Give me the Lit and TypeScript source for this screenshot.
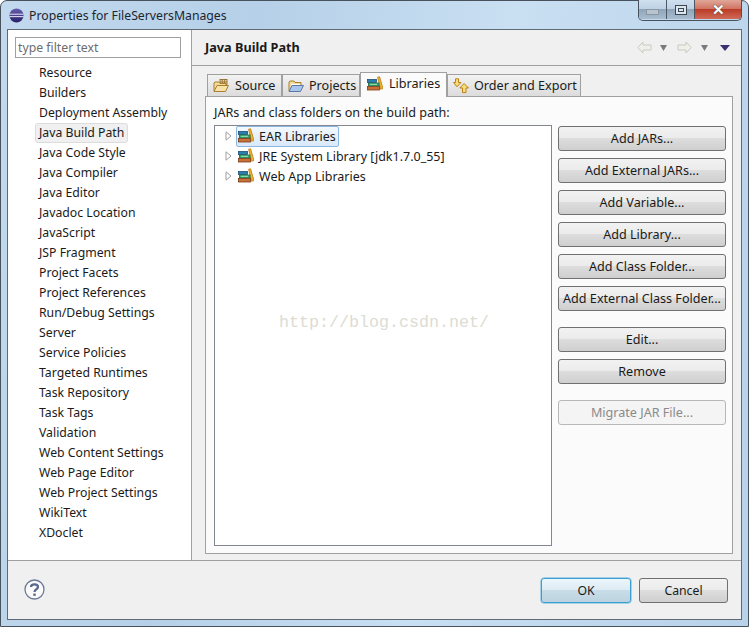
import { LitElement, html, css, svg } from "lit";
import { customElement } from "lit/decorators.js";

const sideItems = ["Resource","Builders","Deployment Assembly","Java Build Path","Java Code Style","Java Compiler","Java Editor","Javadoc Location","JavaScript","JSP Fragment","Project Facets","Project References","Run/Debug Settings","Server","Service Policies","Targeted Runtimes","Task Repository","Task Tags","Validation","Web Content Settings","Web Page Editor","Web Project Settings","WikiText","XDoclet"];

const books = svg`<svg width="16" height="16" viewBox="0 0 16 16">
  <path d="M10.6 1.2 L12.6 .8 L16 12.6 L13.4 13.2 Z" fill="#f2b52a" stroke="#b87a14" stroke-width=".8"/>
  <rect x=".5" y="3.5" width="9" height="3" fill="#2a7fae" stroke="#1c4f78" stroke-width=".8"/>
  <rect x="1.5" y="7" width="10.5" height="3" fill="#38ad72" stroke="#1f6a48" stroke-width=".8"/>
  <path d="M3 8.3H10" stroke="#bfeccd" stroke-width=".8"/>
  <rect x=".5" y="10.5" width="12" height="3.5" fill="#c9703a" stroke="#7a3c14" stroke-width=".8"/>
</svg>`;
const projIcon = svg`<svg width="16" height="16" viewBox="0 0 16 16">
  <path d="M1 13 L1 4 L2 3 L6 3 L7 4.5 L13 4.5 L13 7" fill="#f3dc9a" stroke="#a88030"/>
  <path d="M3 6.5H12" stroke="#fff"/>
  <path d="M1 13.5 L4 7.5 L15.5 7.5 L12.5 13.5 Z" fill="#a9c6ee" stroke="#5a78a8"/>
</svg>`;
const srcIcon = svg`<svg width="16" height="16" viewBox="0 0 16 16">
  <rect x="7" y="1.5" width="7" height="5" fill="#e8d0a0" stroke="#8a6020" stroke-width=".8"/>
  <path d="M9.3 1.5V6.5M11.6 1.5V6.5M7 4H14" stroke="#8a6020" stroke-width=".7"/>
  <path d="M1 13 L1 5 L2 4 L6 4 L7 5.5 L13 5.5 L13 7" fill="#f3dc9a" stroke="#a88030"/>
  <path d="M1 13.5 L4 7.5 L15.5 7.5 L12.5 13.5 Z" fill="#f6e2a8" stroke="#a88030"/>
</svg>`;
const orderIcon = svg`<svg width="16" height="16" viewBox="0 0 16 16">
  <path d="M2.5 .8H5.5V4.5H8L4 8.8L.5 4.5H2.5Z" fill="#f5dc80" stroke="#c08010"/>
  <path d="M11 5.5L15.5 10H13V14.6H9.5V10H6.8Z" fill="#f5dc80" stroke="#c08010"/>
</svg>`;
const arrow = (dir: number) => svg`<svg width="15" height="13" viewBox="0 0 15 13">
  <path transform="${dir < 0 ? "" : "translate(15 0) scale(-1 1)"}" d="M.7 6.5 L6 1 V4 H14 V9 H6 V12 Z" fill="#f0f0ea" stroke="#c8cbc0"/>
</svg>`;
const tri = (c: string, w: number) => svg`<svg width="${w}" height="6" viewBox="0 0 ${w} 6"><path d="M0 0H${w}L${w / 2} 6Z" fill="${c}"/></svg>`;
const expander = svg`<svg width="7" height="10" viewBox="0 0 7 10"><path d="M1 .8 L6 5 L1 9.2 Z" fill="#fff" stroke="#a0a0a0"/></svg>`;

@customElement("app-root")
export class AppRoot extends LitElement {
  static styles = css`
    :host { display: block; width: 749px; height: 627px; position: relative; overflow: hidden; font-family: "Noto Sans", sans-serif; font-size: 12.25px; color: #1a1a1a; background: #fff; }
    svg { flex: none; }
    .frame { width: 749px; height: 627px; box-sizing: border-box; display: flex; flex-direction: column; padding: 0 6px 6px 6px; border-radius: 7px 7px 0 0; border: 1px solid #48525c;
      background: linear-gradient(100deg, #c2d9ee 0%, #b5d0e8 30%, #c9dff2 60%, #b8d2ea 100%); }
    .title { height: 28px; flex: none; display: flex; align-items: center; gap: 5px; padding: 0 0 0 2px; position: relative; color: #1c2530; }
    .globe { width: 15px; height: 15px; margin-top: 1px; }
    .controls { position: absolute; right: 0; top: -1px; height: 20px; display: flex; border: 1px solid #49525c; border-top: none; border-radius: 0 0 5px 5px; overflow: hidden; }
    .ctl { width: 27px; height: 19px; display: flex; align-items: center; justify-content: center; border-right: 1px solid #4c5863; background: linear-gradient(#cfe0ef 0%, #bed2e4 45%, #8ea5b9 50%, #a9bdcf 100%); }
    .ctl.close { width: 46px; border-right: none; background: linear-gradient(#e0a698 0%, #d07564 45%, #bb3c28 50%, #cf6a58 100%); }
    .minbar { width: 11px; height: 4px; background: #b8c4cf; border: 1px solid #8a97a3; margin-top: 4px; }
    .maxbox { width: 10px; height: 8px; border: 1px solid #3b4651; background: #dbe6ef; display: flex; align-items: center; justify-content: center; }
    .maxbox i { width: 4px; height: 2px; border: 1px solid #3b4651; display: block; }
    .x { color: #fff; font: bold 15px "Liberation Sans", sans-serif; text-shadow: 0 0 1px #444, 0 0 1px #444; }
    .body { flex: 1; min-height: 0; display: flex; flex-direction: column; background: #f0f0f0; border: 1px solid #5f6a74; }
    .main { flex: 1; min-height: 0; display: flex; border-bottom: 1px solid #a0a0a0; }
    .side { width: 184px; flex: none; box-sizing: border-box; background: #fff; border-right: 1px solid #a0a0a0; padding: 7px 0 0 0; }
    .filter { margin-left: 7px; width: 166px; height: 21px; box-sizing: border-box; border: 1px solid #a0a0a0; padding-left: 2px; line-height: 19px; color: #6d6d6d; background: #fff; margin-bottom: 5px; }
    .item { height: 20px; line-height: 18px; margin-left: 27px; padding: 0 3px; width: max-content; box-sizing: border-box; border: 1px solid transparent; border-radius: 3px; }
    .item.sel { background: #f0f0f0; border-color: #dcdcdc; }
    .right { flex: 1; min-width: 0; display: flex; flex-direction: column; font-size: 12.6px; }
    .head { height: 36px; flex: none; box-sizing: border-box; border-bottom: 1px solid #a0a0a0; display: flex; align-items: center; padding: 0 11px 0 13px; }
    .head b { font-weight: 700; font-size: 12.7px; flex: 1; margin-top: -1px; }
    .nav { display: flex; align-items: center; }
    .g8 { width: 8px; } .g10 { width: 10px; } .g9 { width: 9px; } .g12 { width: 12px; }
    .content { flex: 1; min-height: 0; padding: 6px 8px 6px 13px; display: flex; flex-direction: column; }
    .tabs { display: flex; height: 24px; flex: none; align-items: flex-end; padding-left: 2px; position: relative; z-index: 1; }
    .tab { height: 22px; box-sizing: border-box; border: 1px solid #a0a0a0; border-bottom: none; display: flex; align-items: center; gap: 6px; padding: 0 3px 0 5px; background: linear-gradient(#f2f2f2, #dcdcdc); white-space: nowrap; }
    .tab.tight { gap: 5px; }
    .tab.on { height: 25px; background: #fbfbfb; margin-bottom: -1px; padding-bottom: 3px; padding-left: 6px; }
    .t1 { width: 75px; } .t2 { width: 78px; } .t3 { width: 87px; } .t4 { width: 134px; }
    .panel { flex: 1; min-height: 0; box-sizing: border-box; border: 1px solid #a0a0a0; background: #fbfbfb; padding: 7px 8px 7px 8px; display: flex; flex-direction: column; }
    .label { height: 21px; line-height: 18px; flex: none; }
    .row2 { flex: 1; min-height: 0; display: flex; gap: 6px; }
    .tree { width: 338px; box-sizing: border-box; border: 1px solid #828790; background: #fff; flex: none; font-size: 12.5px; }
    .node { height: 20px; display: flex; align-items: center; padding-left: 10px; }
    .node > svg { margin-right: 4px; }
    .nlabel { display: flex; align-items: center; gap: 5px; height: 19px; padding: 0 2px 0 1px; border: 1px solid transparent; border-radius: 2px; }
    .nlabel.sel { background: linear-gradient(#f2f8fe, #d8e9fb); border-color: #8cb8e0; }
    .btns { width: 168px; display: flex; flex-direction: column; flex: none; padding-top: 1px; }
    .btn { height: 25px; box-sizing: border-box; border: 1px solid #707070; border-radius: 3px; text-align: center; line-height: 23px; margin-bottom: 7px; background: linear-gradient(#f2f2f2 0%, #ebebeb 48%, #dddddd 50%, #cfcfcf 100%); white-space: nowrap; }
    .btn.off { border-color: #b8b8b8; background: #f4f4f4; color: #8a8a8a; }
    .sp { height: 9px; flex: none; }
    .foot { height: 58px; flex: none; display: flex; align-items: flex-start; padding: 17px 13px 0 16px; box-sizing: border-box; }
    .help { width: 21px; height: 21px; margin-top: 1px; }
    .foot .btn { margin: 0; width: 90px; height: 25px; }
    .foot .ok { margin-left: auto; border-color: #3c9fd2; background: linear-gradient(#ecf6fb 0%, #dcebf3 48%, #c8dde8 50%, #bcd3df 100%); box-shadow: 0 0 0 .5px #5cb4e0; }
    .foot .cancel { margin-left: 8px; width: 89px; }
    .mark { position: absolute; left: 279px; top: 313px; font: 16.67px "Liberation Mono", monospace; color: #dcdcd4; pointer-events: none; }
  `;

  render() {
    const btn = (t: string) => html`<div class="btn">${t}</div>`;
    return html`<div class="frame">
      <div class="title">
        <svg class="globe" viewBox="0 0 16 16">
          <defs><linearGradient id="g" x1="0" x2="0" y1="0" y2="1"><stop offset="0" stop-color="#6a5fb0"/><stop offset="1" stop-color="#241f66"/></linearGradient></defs>
          <circle cx="8" cy="8" r="7.5" fill="url(#g)"/>
          <path d="M.6 6.6H15.4M.6 9.2H15.4" stroke="#f3f3ff" stroke-width="1"/>
        </svg>
        <span>Properties for FileServersManages</span>
        <div class="controls">
          <div class="ctl"><div class="minbar"></div></div>
          <div class="ctl"><div class="maxbox"><i></i></div></div>
          <div class="ctl close"><span class="x">✕</span></div>
        </div>
      </div>
      <div class="body">
        <div class="main">
          <div class="side">
            <div class="filter">type filter text</div>
            ${sideItems.map((s) => html`<div class="item ${s === "Java Build Path" ? "sel" : ""}">${s}</div>`)}
          </div>
          <div class="right">
            <div class="head"><b>Java Build Path</b>
              <div class="nav">${arrow(-1)}<span class="g8"></span>${tri("#7a7a7a", 7)}<span class="g10"></span>${arrow(1)}<span class="g9"></span>${tri("#7a7a7a", 7)}<span class="g12"></span>${tri("#3a2f70", 10)}</div>
            </div>
            <div class="content">
              <div class="tabs">
                <div class="tab t1">${srcIcon}<span>Source</span></div>
                <div class="tab t2 tight">${projIcon}<span>Projects</span></div>
                <div class="tab t3 on">${books}<span>Libraries</span></div>
                <div class="tab t4 tight">${orderIcon}<span>Order and Export</span></div>
              </div>
              <div class="panel">
                <div class="label">JARs and class folders on the build path:</div>
                <div class="row2">
                  <div class="tree">
                    <div class="node">${expander}<div class="nlabel sel">${books}<span>EAR Libraries</span></div></div>
                    <div class="node">${expander}<div class="nlabel">${books}<span>JRE System Library [jdk1.7.0_55]</span></div></div>
                    <div class="node">${expander}<div class="nlabel">${books}<span>Web App Libraries</span></div></div>
                  </div>
                  <div class="btns">
                    ${btn("Add JARs...")}${btn("Add External JARs...")}${btn("Add Variable...")}${btn("Add Library...")}${btn("Add Class Folder...")}${btn("Add External Class Folder...")}
                    <div class="sp"></div>
                    ${btn("Edit...")}${btn("Remove")}
                    <div class="sp"></div>
                    <div class="btn off">Migrate JAR File...</div>
                  </div>
                </div>
              </div>
            </div>
          </div>
        </div>
        <div class="foot">
          <svg class="help" viewBox="0 0 21 21">
            <circle cx="10.5" cy="10.5" r="9.5" fill="#fafafa" stroke="#6b7a99" stroke-width="1.3"/>
            <path d="M7 8 C7 4.5 14 4.5 14 8 C14 10.5 10.5 10 10.5 13" fill="none" stroke="#5a6a8c" stroke-width="2.2"/>
            <rect x="9.3" y="14.5" width="2.4" height="2.4" fill="#5a6a8c"/>
          </svg>
          <div class="btn ok">OK</div>
          <div class="btn cancel">Cancel</div>
        </div>
      </div>
    </div>
    <div class="mark">http://blog.csdn.net/</div>`;
  }
}
